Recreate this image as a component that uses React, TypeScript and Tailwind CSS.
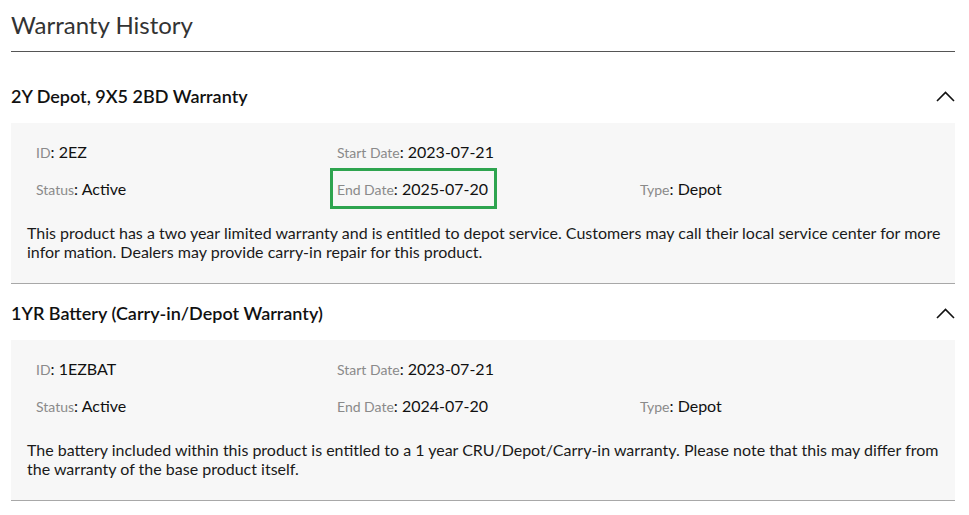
type Warranty = {
  title: string;
  id: string;
  startDate: string;
  endDate: string;
  status: string;
  type: string;
  description: string;
  highlightEnd?: boolean;
};

const warranties: Warranty[] = [
  {
    title: '2Y Depot, 9X5 2BD Warranty',
    id: '2EZ',
    startDate: '2023-07-21',
    endDate: '2025-07-20',
    status: 'Active',
    type: 'Depot',
    description:
      'This product has a two year limited warranty and is entitled to depot service. Customers may call their local service center for more infor mation. Dealers may provide carry-in repair for this product.',
    highlightEnd: true,
  },
  {
    title: '1YR Battery (Carry-in/Depot Warranty)',
    id: '1EZBAT',
    startDate: '2023-07-21',
    endDate: '2024-07-20',
    status: 'Active',
    type: 'Depot',
    description:
      'The battery included within this product is entitled to a 1 year CRU/Depot/Carry-in warranty. Please note that this may differ from the warranty of the base product itself.',
  },
];

const Field = ({ label, value }: { label: string; value: string }) => (
  <>
    <span className="text-[14px] text-[#8a8a8a]">{label}</span>
    <span className="text-[#111]">: {value}</span>
  </>
);

const Chevron = () => (
  <svg width="19" height="11" viewBox="0 0 19 11" fill="none">
    <path d="M1 10L9.5 1.5L18 10" stroke="#111" strokeWidth="1.6" />
  </svg>
);

const Section = ({ w, first }: { w: Warranty; first?: boolean }) => (
  <div className={first ? 'mt-[15px]' : ''}>
    {/* 見出し */}
    <div className="flex h-[56px] items-center justify-between pt-[2px]">
      <h2 className="text-[18px] font-semibold text-[#111]">{w.title}</h2>
      <Chevron />
    </div>

    {/* 詳細パネル */}
    <div className="border-b border-[#a8a8a8] bg-[#f7f7f7] pt-[11px] pr-[8px] pb-[22px] pl-4">
      <div className="ml-[9px] grid grid-cols-[301px_303px_1fr] text-base leading-5">
        <div className="py-2">
          <Field label="ID" value={w.id} />
        </div>
        <div className="py-2">
          <Field label="Start Date" value={w.startDate} />
        </div>
        <div className="py-2" />
        <div className="py-2">
          <Field label="Status" value={w.status} />
        </div>
        <div className="py-2">
          {w.highlightEnd ? (
            <span className="-ml-[7px] -mr-[9px] border-[3px] border-[#2ea44f] pt-[8px] pr-[6px] pb-[8px] pl-[4px]">
              <Field label="End Date" value={w.endDate} />
            </span>
          ) : (
            <Field label="End Date" value={w.endDate} />
          )}
        </div>
        <div className="py-2">
          <Field label="Type" value={w.type} />
        </div>
      </div>
      <p className="mt-[15px] text-base leading-[19px] text-[#1a1a1a]">{w.description}</p>
    </div>
  </div>
);

export default function App() {
  return (
    <div
      className="min-h-[515px] bg-white"
      style={{ fontFamily: 'Lato, "Noto Sans", sans-serif' }}
    >
      <div className="ml-[11px] w-[944px]">
        <h1 className="border-b border-[#555] pt-[9px] pb-[10px] text-[24px] leading-8 text-[#333]">
          Warranty History
        </h1>
        {warranties.map((w, i) => (
          <Section key={w.id} w={w} first={i === 0} />
        ))}
      </div>
    </div>
  );
}
